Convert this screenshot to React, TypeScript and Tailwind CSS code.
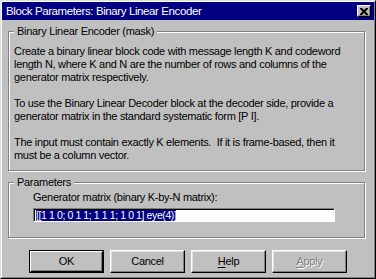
export default function App() {
  const lines1 = [
    "Create a binary linear block code with message length K and codeword",
    "length N, where K and N are the number of rows and columns of the",
    "generator matrix respectively.",
  ];
  const lines2 = [
    "To use the Binary Linear Decoder block at the decoder side, provide a",
    "generator matrix in the standard systematic form [P I].",
  ];
  const lines3 = [
    "The input must contain exactly K elements.\u00a0 If it is frame-based, then it",
    "must be a column vector.",
  ];
  const txt = "text-[11px] tracking-[-0.3px]";
  const btn =
    "w-[75px] h-[23px] flex items-center justify-center text-[11px] tracking-[-0.3px] border border-t-white border-l-white border-r-black border-b-black shadow-[inset_-1px_-1px_0_#808080,inset_1px_1px_0_#dfdfdf] bg-[#c0c0c0]";
  return (
    <div className="w-[376px] h-[279px] bg-[#c0c0c0] border border-t-[#dfdfdf] border-l-[#dfdfdf] border-r-black border-b-black font-['Liberation_Sans',Arial,sans-serif] text-black">
      <div className="h-full border border-t-white border-l-white border-r-[#808080] border-b-[#808080] flex flex-col">
        <div className="h-[18px] bg-[#000080] flex items-center justify-between pl-[4px] pr-[3px]">
          <span className="text-white text-[11.5px] tracking-[-0.4px] leading-[18px] whitespace-nowrap">
            Block Parameters: Binary Linear Encoder
          </span>
          <div className="w-[14px] h-[12px] bg-[#c0c0c0] border border-t-white border-l-white border-r-black border-b-black shadow-[inset_-1px_-1px_0_#808080] flex items-center justify-center">
            <svg width="8" height="7" viewBox="0 0 8 7">
              <path d="M0 0h2l2 2 2-2h2v1l-2.5 2.5L8 6v1H6L4 5 2 7H0V6l2.5-2.5L0 1z" fill="#000" />
            </svg>
          </div>
        </div>

        <div className="mt-[11px] ml-[6px] w-[357px] h-[140px] relative border border-[#808080] shadow-[inset_1px_1px_0_#fff,1px_1px_0_#fff]">
          <span className={`absolute left-[5px] top-[-7px] px-[3px] bg-[#c0c0c0] leading-[13px] whitespace-nowrap ${txt}`}>
            Binary Linear Encoder (mask)
          </span>
          <div className={`pt-[13px] pl-[5px] leading-[13px] whitespace-nowrap ${txt}`}>
            {lines1.map((l) => (
              <div key={l}>{l}</div>
            ))}
            <div className="h-[13px]" />
            {lines2.map((l) => (
              <div key={l}>{l}</div>
            ))}
            <div className="h-[13px]" />
            {lines3.map((l) => (
              <div key={l}>{l}</div>
            ))}
          </div>
        </div>

        <div className="mt-[11px] ml-[6px] w-[357px] h-[56px] relative border border-[#808080] shadow-[inset_1px_1px_0_#fff,1px_1px_0_#fff]">
          <span className={`absolute left-[5px] top-[-7px] px-[3px] bg-[#c0c0c0] leading-[13px] whitespace-nowrap ${txt}`}>
            Parameters
          </span>
          <div className={`pt-[8px] pl-[24px] leading-[13px] whitespace-nowrap ${txt}`}>
            Generator matrix (binary K-by-N matrix):
          </div>
          <div className="mt-[4px] ml-[24px] w-[302px] h-[14px] bg-white border border-t-[#808080] border-l-[#808080] border-r-white border-b-white shadow-[inset_1px_1px_0_#000] flex items-center pl-[2px]">
            <span className="bg-[#000080] text-white text-[10.5px] tracking-[-0.4px] leading-[11px] whitespace-nowrap">
              [[1 1 0; 0 1 1; 1 1 1; 1 0 1] eye(4)]
            </span>
          </div>
        </div>

        <div className="mt-[12px] flex justify-center gap-[6px]">
          <div className="w-[75px] h-[23px] border border-black">
            <div className="w-full h-full flex items-center justify-center text-[11px] tracking-[-0.3px] border border-t-white border-l-white border-r-black border-b-black shadow-[inset_-1px_-1px_0_#808080]">
              OK
            </div>
          </div>
          <div className={btn}>Cancel</div>
          <div className={btn}>
            <span>
              <span className="underline underline-offset-2">H</span>elp
            </span>
          </div>
          <div className={btn}>
            <span className="text-[#808080] [text-shadow:1px_1px_0_#fff]">
              <span className="underline underline-offset-2">A</span>pply
            </span>
          </div>
        </div>
      </div>
    </div>
  );
}
